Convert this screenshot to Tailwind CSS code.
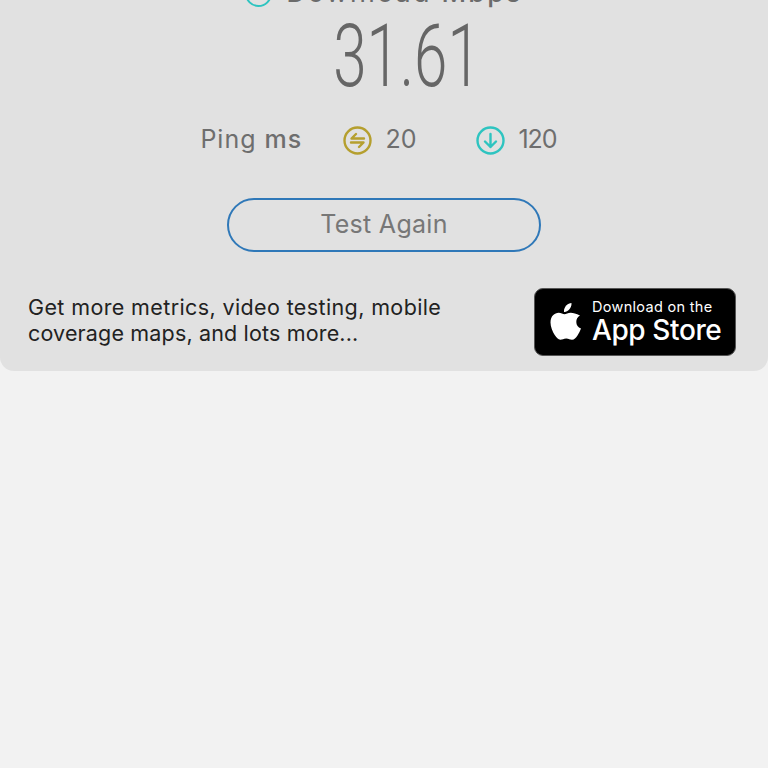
<!DOCTYPE html>
<html>
<head>
    <title>Speed Test Result</title>
    <script src="https://cdn.jsdelivr.net/npm/@tailwindcss/browser@4"></script>
</head>
<body class="bg-[#f2f2f2] h-[768px] overflow-hidden font-['Inter',sans-serif]">
    <div class="h-[371px] bg-[#e1e1e1] rounded-b-[14px] overflow-hidden flex flex-col">
        <!-- header is cut off by the top of the screen -->
        <div class="h-[6px] flex justify-center">
            <div class="flex gap-[14px] -mt-[20px] h-[26px] items-center text-[#6b6b6b] text-[27px] tracking-[2.2px]">
                <svg class="w-[27px] h-[27px] shrink-0" viewBox="0 0 27 27" fill="none" stroke="#2ec4c0" stroke-width="2"><circle cx="13.5" cy="13.5" r="12.5"/></svg>
                <span>Download <span class="font-medium">Mbps</span></span>
            </div>
        </div>

        <div class="h-[96px] flex justify-center items-center pl-[46px]">
            <span class="block text-[87px] leading-none font-['Roboto',sans-serif] font-light text-[#666666] scale-x-[0.69] mt-[5px]">31.61</span>
        </div>

        <div class="mt-[22px] flex justify-center items-center text-[25px] text-[#6e6e6e] h-[32px] pr-[11px]">
            <span class="w-[143px] tracking-[1px]">Ping <span class="font-medium">ms</span></span>
            <svg class="w-[29px] h-[29px] mr-[13px]" viewBox="0 0 29 29" fill="none" stroke="#b59f2e" stroke-width="2.4" stroke-linecap="round" stroke-linejoin="round">
                <circle cx="14.5" cy="14.5" r="13"/>
                <path d="M21 12.500H8.500L13 8"/>
                <path d="M8 16.500h12.500L16 21"/>
            </svg>
            <span class="w-[91px]">20</span>
            <svg class="w-[29px] h-[29px] mr-[13px]" viewBox="0 0 29 29" fill="none" stroke="#2ec4c0" stroke-width="2.4" stroke-linecap="round" stroke-linejoin="round">
                <circle cx="14.5" cy="14.5" r="13"/>
                <path d="M14.500 8v13M9 15.500l5.500 5.500 5.500-5.500"/>
            </svg>
            <span class="tracking-[-1px]">120</span>
        </div>

        <div class="mt-[42px] flex justify-center">
            <button class="w-[314px] h-[54px] rounded-full border-2 border-[#2f78b8] text-[25px] text-[#777777] tracking-[0.3px]">Test Again</button>
        </div>

        <div class="mt-[36px] pl-[28px] pr-[32px] flex justify-between items-center">
            <p class="text-[21.5px] leading-[26px] text-[#222222] tracking-[0.38px] -mt-[4px]">Get more metrics, video testing, mobile<br><span class="tracking-[0.16px]">coverage maps, and lots more...</span></p>
            <div class="w-[202px] h-[68px] bg-black rounded-[9px] border border-[#555555] flex items-center text-white">
                <svg class="w-[32px] h-[40px] ml-[14px] mr-[11px] shrink-0" viewBox="0 0 32 40" fill="#ffffff">
                    <path d="M22.500 1c.2 3-1 5-2.300 6.500-1.400 1.600-3.300 2.600-5.200 2.400-.3-2.700 1-5 2.200-6.300C18.600 2.100 20.800 1.100 22.500 1z"/>
                    <path d="M31 13.500c-2.600 1.700-3.700 3.800-3.700 6.400 0 3.200 1.800 5.500 4.700 6.700-.8 2.500-2 4.800-3.500 6.900-1.700 2.400-3.200 4.300-5.500 4.300-2.200 0-3-1.300-5.800-1.300-2.700 0-3.800 1.300-5.800 1.300-2.300 0-3.900-2.100-5.700-4.700C3.500 29.500 1.500 24.500 1.500 20.500c0-6.300 4.100-9.700 8.200-9.700 2.300 0 4.300 1.500 5.800 1.500 1.400 0 3.600-1.600 6.200-1.600 2.600 0 5.400.9 9.300 2.800z"/>
                </svg>
                <div class="flex flex-col">
                    <span class="text-[14.5px] leading-[16px] tracking-[0.3px]">Download on the</span>
                    <span class="text-[28px] leading-[30px] font-medium tracking-[-0.4px]">App Store</span>
                </div>
            </div>
        </div>
    </div>
</body>
</html>
